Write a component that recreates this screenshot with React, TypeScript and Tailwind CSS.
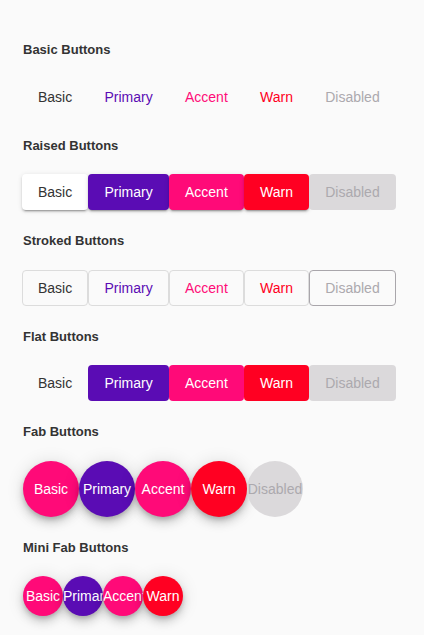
import React from 'react';

type Color = 'basic' | 'primary' | 'accent' | 'warn' | 'disabled';

const labels: { color: Color; label: string }[] = [
  { color: 'basic', label: 'Basic' },
  { color: 'primary', label: 'Primary' },
  { color: 'accent', label: 'Accent' },
  { color: 'warn', label: 'Warn' },
  { color: 'disabled', label: 'Disabled' },
];

const textColor: Record<Color, string> = {
  basic: 'text-[#333]',
  primary: 'text-[#5a0cb4]',
  accent: 'text-[#ff0a78]',
  warn: 'text-[#ff0022]',
  disabled: 'text-[#aca9ae]',
};

const fillColor: Record<Color, string> = {
  basic: 'bg-white text-[#333]',
  primary: 'bg-[#5a0cb4] text-white',
  accent: 'bg-[#ff0a78] text-white',
  warn: 'bg-[#ff0022] text-white',
  disabled: 'bg-[#dbd9db] text-[#aca9ae]',
};

const fabColor: Record<Color, string> = {
  basic: 'bg-[#ff0a78] text-white',
  primary: 'bg-[#5a0cb4] text-white',
  accent: 'bg-[#ff0a78] text-white',
  warn: 'bg-[#ff0022] text-white',
  disabled: 'bg-[#dbd9db] text-[#aca9ae]',
};

const base = 'h-9 min-w-16 rounded text-sm leading-9 whitespace-nowrap';
const fabShadow =
  'shadow-[0_3px_5px_-1px_rgba(0,0,0,0.2),0_6px_10px_0_rgba(0,0,0,0.14),0_1px_18px_0_rgba(0,0,0,0.12)]';

const Section: React.FC<{ title: string; row?: string; children: React.ReactNode }> = ({
  title,
  row = 'gap-[0.25px]',
  children,
}) => (
  <section className="mb-[21px]">
    <h2 className="ml-px h-5 leading-5 text-[13px] font-bold text-[#333] mb-[18.5px]">{title}</h2>
    <div className={`flex items-center ${row}`}>{children}</div>
  </section>
);

export default function App() {
  return (
    <div
      className="min-h-[635px] bg-[#fafafa] pl-[22px] pr-[23px] pt-[40px]"
      style={{ fontFamily: '"Liberation Sans", Arial, sans-serif' }}
    >
      <Section title="Basic Buttons">
        {labels.map(({ color, label }) => (
          <button key={label} className={`${base} px-4 bg-transparent ${textColor[color]}`}>
            {label}
          </button>
        ))}
      </Section>

      <Section title="Raised Buttons">
        {labels.map(({ color, label }) => (
          <button
            key={label}
            className={`${base} px-4 ${fillColor[color]} ${
              color === 'disabled' ? '' : 'shadow-[0_3px_1px_-2px_rgba(0,0,0,0.2),0_2px_2px_0_rgba(0,0,0,0.14),0_1px_5px_0_rgba(0,0,0,0.12)]'
            }`}
          >
            {label}
          </button>
        ))}
      </Section>

      <Section title="Stroked Buttons">
        {labels.map(({ color, label }) => (
          <button
            key={label}
            className={`${base} px-[15px] leading-[34px] border bg-transparent ${textColor[color]} ${
              color === 'disabled' ? 'border-[#a9a6ab]' : 'border-[#dcdcdc]'
            }`}
          >
            {label}
          </button>
        ))}
      </Section>

      <Section title="Flat Buttons">
        {labels.map(({ color, label }) => (
          <button
            key={label}
            className={`${base} px-4 ${color === 'basic' ? 'bg-transparent text-[#333]' : fillColor[color]}`}
          >
            {label}
          </button>
        ))}
      </Section>

      <Section title="Fab Buttons" row="ml-px">
        {labels.map(({ color, label }) => (
          <button
            key={label}
            className={`size-14 shrink-0 rounded-full overflow-hidden p-0 text-center text-sm leading-[56px] whitespace-nowrap ${fabColor[color]} ${
              color === 'disabled' ? '' : fabShadow
            }`}
          >
            {label}
          </button>
        ))}
      </Section>

      <Section title="Mini Fab Buttons" row="ml-px">
        {labels.slice(0, 4).map(({ color, label }) => (
          <button
            key={label}
            className={`block size-10 shrink-0 rounded-full overflow-hidden p-0 text-center text-sm leading-10 whitespace-nowrap ${fabColor[color]} ${fabShadow}`}
          >
            {label}
          </button>
        ))}
      </Section>
    </div>
  );
}
